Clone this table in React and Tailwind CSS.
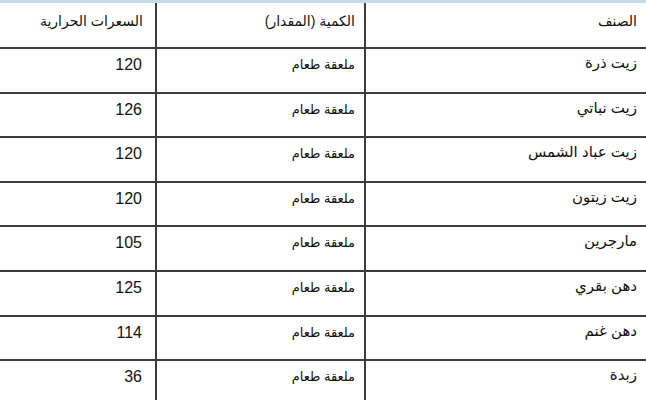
const ROWS = [
  ['زيت ذرة', 'ملعقة طعام', '120'],
  ['زيت نباتي', 'ملعقة طعام', '126'],
  ['زيت عباد الشمس', 'ملعقة طعام', '120'],
  ['زيت زيتون', 'ملعقة طعام', '120'],
  ['مارجرين', 'ملعقة طعام', '105'],
  ['دهن بقري', 'ملعقة طعام', '125'],
  ['دهن غنم', 'ملعقة طعام', '114'],
  ['زبدة', 'ملعقة طعام', '36'],
]

const font = { fontFamily: '"Liberation Sans", "DejaVu Sans", sans-serif' }

export default function App() {
  return (
    <div className="w-[646px] h-[400px] overflow-hidden bg-white text-[#111]" style={font}>
      <div className="h-[3px] bg-[#cbd8ea]" />
      <div dir="rtl" className="grid grid-cols-[282px_209px_155px]">
        <div className="h-[46px] border-b-2 border-l-2 border-[#3c3c3c] pr-[9px] pt-[8px] text-[14px]">الصنف</div>
        <div className="h-[46px] border-b-2 border-l-2 border-[#3c3c3c] pr-[9px] pt-[8px] text-[14px]">الكمية (المقدار)</div>
        <div className="h-[46px] border-b-2 border-[#3c3c3c] pr-[12px] pt-[8px] text-[14px]">السعرات الحرارية</div>
        {ROWS.map(([name, qty, cal]) => (
          <div key={name} className="contents">
            <div className="h-[44.6px] border-b-2 border-l-2 border-[#3c3c3c] pr-[9px] pt-[3px] text-[15px]">{name}</div>
            <div className="h-[44.6px] border-b-2 border-l-2 border-[#3c3c3c] pr-[9px] pt-[6px] text-[13px]">{qty}</div>
            <div className="h-[44.6px] border-b-2 border-[#3c3c3c] pr-[13px] pt-[4px] text-[16px]">{cal}</div>
          </div>
        ))}
      </div>
    </div>
  )
}
